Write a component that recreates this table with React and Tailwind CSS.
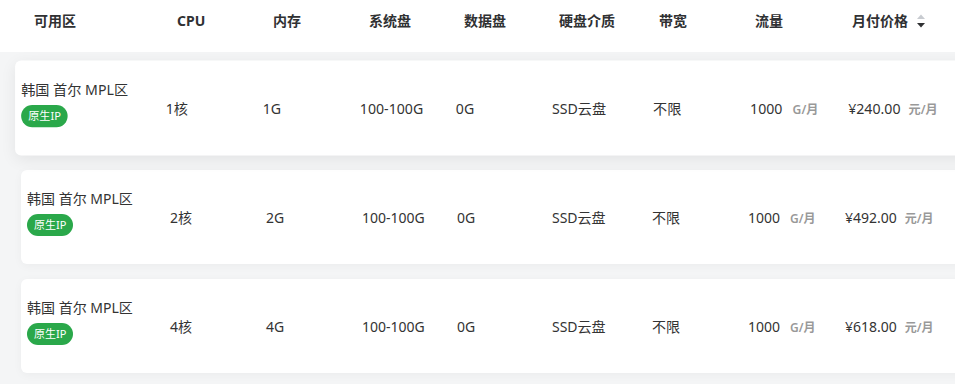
import React from 'react';

const rows = [
  { cpu: '1核', mem: '1G', price: '¥240.00', active: true },
  { cpu: '2核', mem: '2G', price: '¥492.00' },
  { cpu: '4核', mem: '4G', price: '¥618.00' },
];

const cols = 'grid grid-cols-[143px_96px_96px_95px_95px_100px_96px_97px_1fr] items-center';

const SortIcon = () => (
  <svg width="10" height="16" viewBox="0 0 10 16" className="ml-[8px] mt-[2px]">
    <path d="M1 6 L5 1.5 L9 6 Z" fill="#c8cbd0" />
    <path d="M1 10 L5 14.5 L9 10 Z" fill="#303133" />
  </svg>
);

const Row = ({ row }) => (
  <div
    className={`${cols} h-[94px] bg-white rounded-[6px] pl-[6px] text-[14px] text-[#333] ${
      row.active
        ? 'scale-[1.011] shadow-[0_4px_16px_rgba(0,0,0,0.07)]'
        : 'shadow-[0_2px_10px_rgba(0,0,0,0.04)]'
    }`}
  >
    <div className="flex flex-col items-start pb-[10px]">
      <span className="leading-[20px]">韩国 首尔 MPL区</span>
      <span className="mt-[5px] h-[22px] px-[7px] rounded-full bg-[#2aa84a] text-white text-[11px] leading-[22px]">
        原生IP
      </span>
    </div>
    <div>{row.cpu}</div>
    <div>{row.mem}</div>
    <div>100-100G</div>
    <div>0G</div>
    <div>SSD云盘</div>
    <div>不限</div>
    <div className="flex items-baseline">
      1000
      <span className="ml-[10px] text-[12px] font-semibold text-[#999]">G/月</span>
    </div>
    <div className="flex items-baseline whitespace-nowrap">
      {row.price}
      <span className="ml-[8px] text-[12px] font-semibold text-[#999]">元/月</span>
    </div>
  </div>
);

const App = () => {
  return (
    <div className="w-full h-[384px] overflow-hidden bg-[#f4f5f6] font-['Noto_Sans','Noto_Sans_CJK_SC',sans-serif]">
      <div className="w-[1120px]">
        <div className="bg-white h-[52px]">
          <div className={`${cols} mx-[21px] pl-[13px] h-[40px] text-[14px] font-bold text-[#303133]`}>
            <div>可用区</div>
            <div>CPU</div>
            <div>内存</div>
            <div>系统盘</div>
            <div>数据盘</div>
            <div>硬盘介质</div>
            <div>带宽</div>
            <div>流量</div>
            <div className="flex items-center">
              月付价格
              <SortIcon />
            </div>
          </div>
        </div>
        <div className="flex flex-col gap-[15px] px-[21px] pt-[9px]">
          {rows.map((row, i) => (
            <Row key={i} row={row} />
          ))}
        </div>
      </div>
    </div>
  );
};

export default App;
